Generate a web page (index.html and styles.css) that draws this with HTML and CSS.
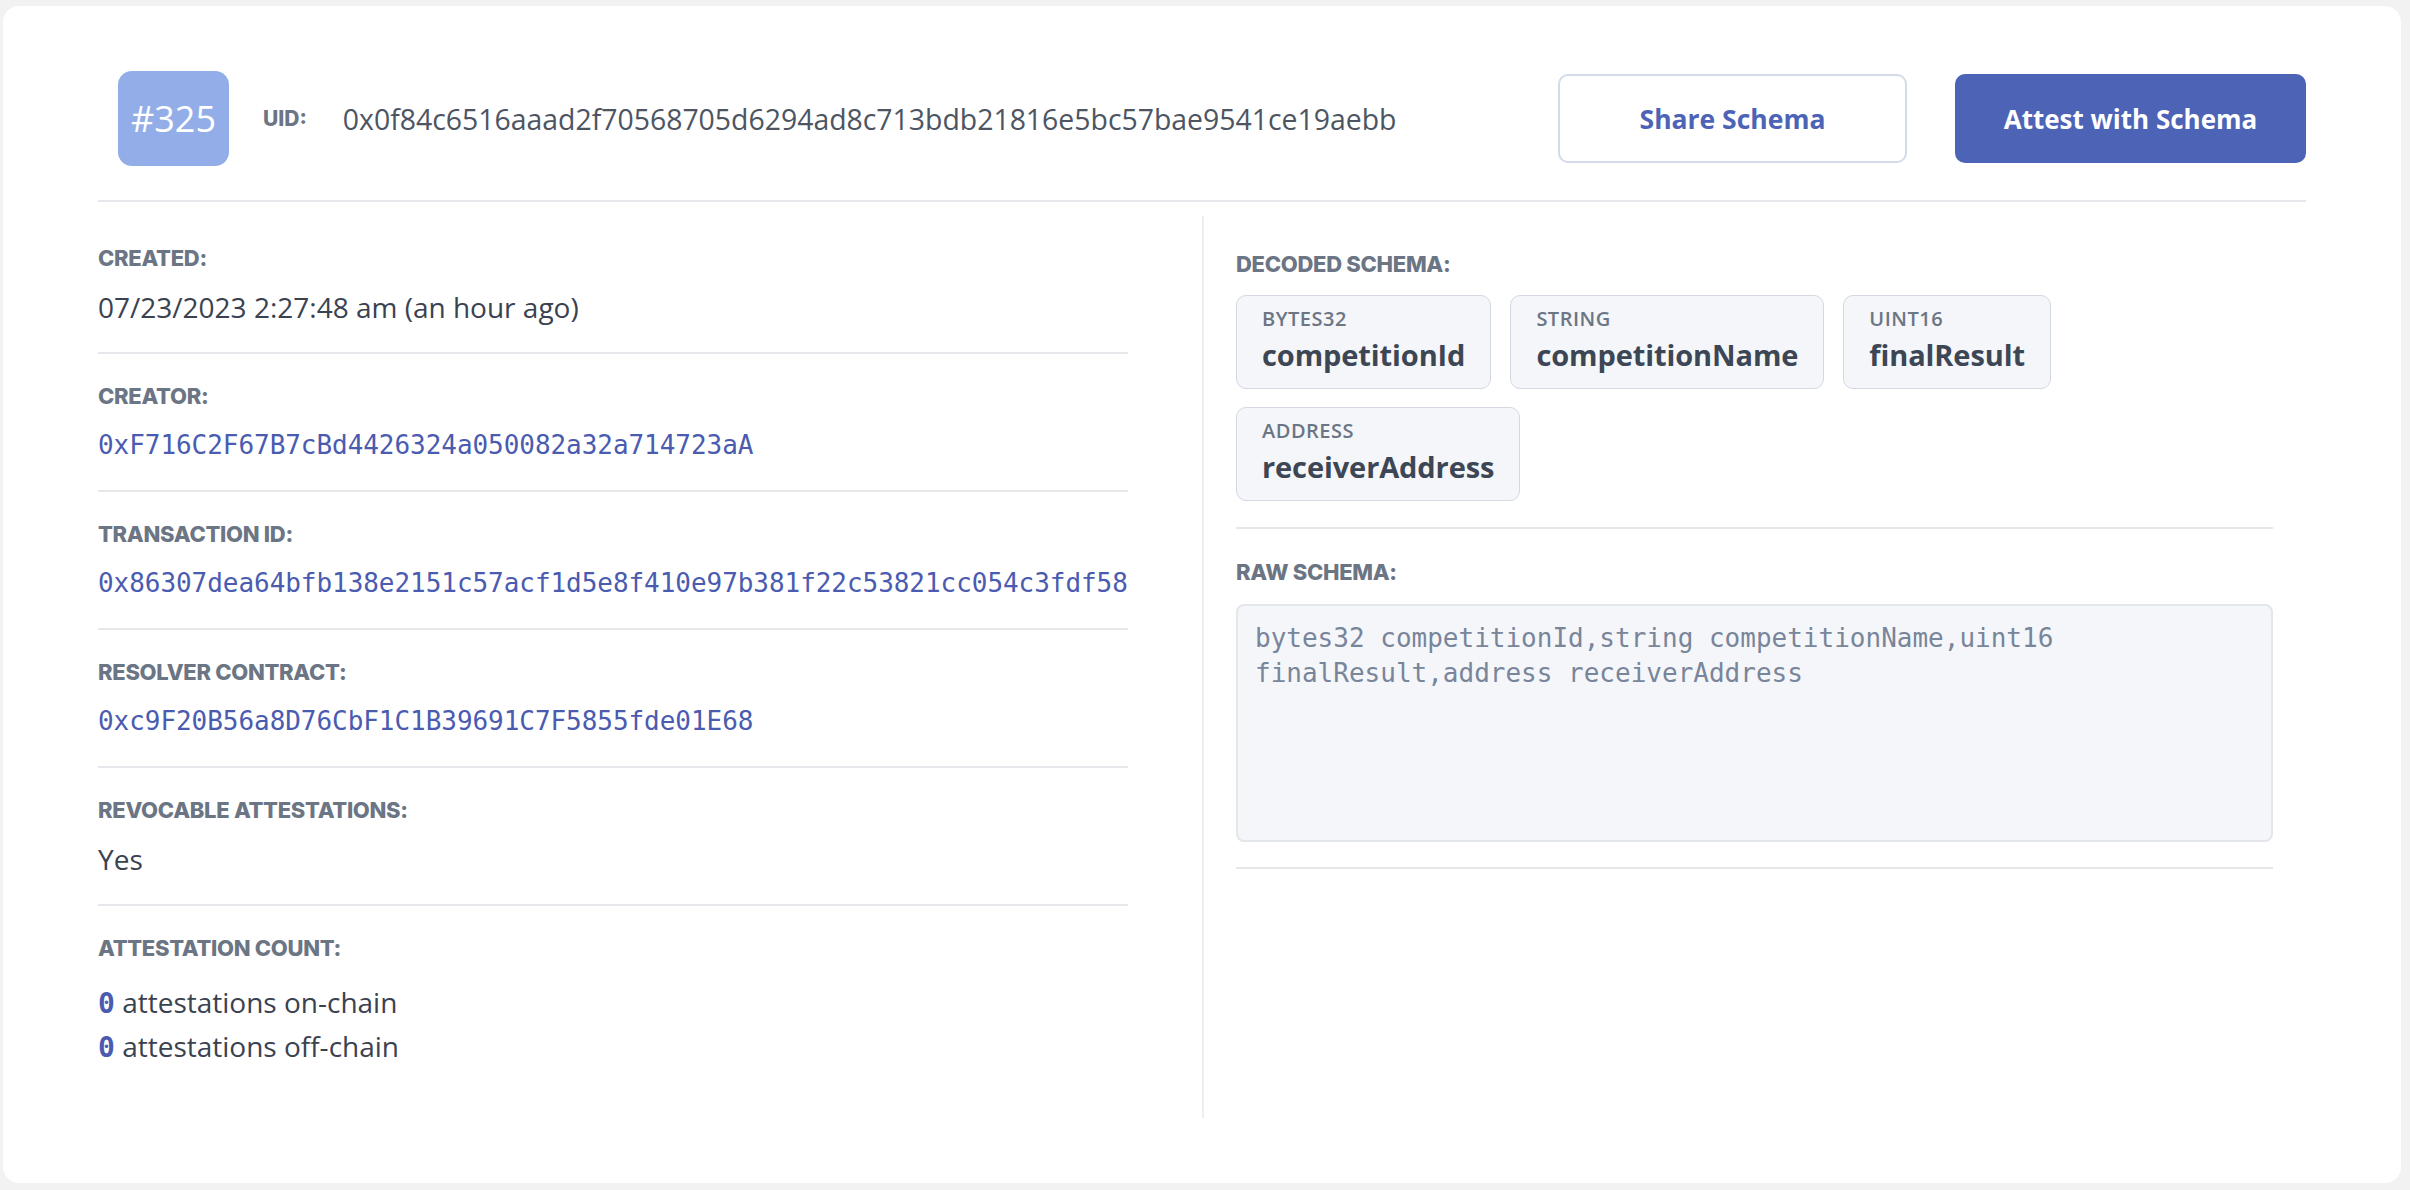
FILE: index.html
```html
<!DOCTYPE html>
<html lang="en">
<head>
<meta charset="utf-8">
<title>Schema #325</title>
<link rel="stylesheet" href="styles.css">
</head>
<body>
<div class="page">
  <div class="card">
    <header class="header">
      <div class="badge">#325</div>
      <span class="uid-label">UID:</span>
      <span class="uid-value">0x0f84c6516aaad2f70568705d6294ad8c713bdb21816e5bc57bae9541ce19aebb</span>
      <div class="actions">
        <button class="btn btn-outline">Share Schema</button>
        <button class="btn btn-primary">Attest with Schema</button>
      </div>
    </header>
    <div class="columns">
      <div class="col-left">
        <section class="field">
          <div class="label">CREATED:</div>
          <div class="value">07/23/2023 2:27:48 am (an hour ago)</div>
        </section>
        <section class="field">
          <div class="label">CREATOR:</div>
          <div class="value mono">0xF716C2F67B7cBd4426324a050082a32a714723aA</div>
        </section>
        <section class="field">
          <div class="label">TRANSACTION ID:</div>
          <div class="value mono">0x86307dea64bfb138e2151c57acf1d5e8f410e97b381f22c53821cc054c3fdf58</div>
        </section>
        <section class="field">
          <div class="label">RESOLVER CONTRACT:</div>
          <div class="value mono">0xc9F20B56a8D76CbF1C1B39691C7F5855fde01E68</div>
        </section>
        <section class="field">
          <div class="label">REVOCABLE ATTESTATIONS:</div>
          <div class="value">Yes</div>
        </section>
        <section class="field field-last">
          <div class="label">ATTESTATION COUNT:</div>
          <div class="counts">
            <div class="count-line"><span class="count-num">0</span> attestations on-chain</div>
            <div class="count-line"><span class="count-num">0</span> attestations off-chain</div>
          </div>
        </section>
      </div>
      <div class="col-right">
        <section class="rfield rfield-first">
          <div class="label">DECODED SCHEMA:</div>
          <div class="chips">
            <div class="chip"><div class="chip-type">BYTES32</div><div class="chip-name">competitionId</div></div>
            <div class="chip"><div class="chip-type">STRING</div><div class="chip-name">competitionName</div></div>
            <div class="chip"><div class="chip-type">UINT16</div><div class="chip-name">finalResult</div></div>
            <div class="chip"><div class="chip-type">ADDRESS</div><div class="chip-name">receiverAddress</div></div>
          </div>
        </section>
        <section class="rfield rfield-raw">
          <div class="label">RAW SCHEMA:</div>
          <div class="raw">bytes32 competitionId,string competitionName,uint16 finalResult,address receiverAddress</div>
        </section>
      </div>
    </div>
  </div>
</div>
</body>
</html>
```

FILE: styles.css
```css
* { box-sizing: border-box; }

html, body {
  margin: 0;
  padding: 0;
  background: #f2f2f2;
}

body {
  font-family: "Open Sans", "Noto Sans", sans-serif;
  color: #3a4250;
}

.page {
  padding: 6px 9px 8px 3px;
}

.card {
  background: #ffffff;
  border-radius: 16px;
  padding: 65px 95px 65px 95px;
}

/* Header */
.header {
  display: flex;
  align-items: center;
  padding: 0 0 34px 20px;
  border-bottom: 2px solid #e6e7ea;
}

.badge {
  width: 111px;
  height: 95px;
  border-radius: 14px;
  background: #93ade8;
  color: #ffffff;
  font-size: 36px;
  font-weight: 500;
  display: flex;
  align-items: center;
  justify-content: center;
}

.uid-label {
  margin-left: 34px;
  font-family: "Inter", sans-serif;
  font-weight: 800;
  font-size: 21px;
  color: #6b7584;
}

.uid-value {
  margin-left: 36px;
  font-size: 28.4px;
  color: #4d5562;
}

.actions {
  margin-left: auto;
  display: flex;
  gap: 48px;
}

.btn {
  width: 349px;
  height: 89px;
  border-radius: 10px;
  font-family: "Open Sans", sans-serif;
  font-weight: 700;
  font-size: 26.5px;
  cursor: pointer;
}

.btn-outline {
  background: #ffffff;
  border: 2px solid #d3dae8;
  color: #4c63b6;
}

.btn-primary {
  width: 351px;
  background: #4c63b6;
  border: 2px solid #4c63b6;
  color: #ffffff;
  font-size: 26px;
}

/* Columns */
.columns {
  display: grid;
  grid-template-columns: 1fr 1fr;
  margin-top: 14px;
}

.col-left {
  padding-right: 74px;
}

.col-right {
  border-left: 2px solid #eceef0;
  padding: 0 33px 0 32px;
}

.label {
  font-family: "Inter", sans-serif;
  font-weight: 800;
  font-size: 22px;
  line-height: 32px;
  letter-spacing: -0.3px;
  color: #6b7584;
}

.field {
  padding: 26px 0 25px;
  border-bottom: 2px solid #e6e7ea;
}

.field .value {
  margin-top: 13px;
  font-size: 28px;
  line-height: 40px;
  color: #3a4250;
  white-space: nowrap;
}

.field .value.mono {
  font-family: "DejaVu Sans Mono", "Liberation Mono", monospace;
  font-size: 26px;
  color: #4a5bb0;
  letter-spacing: -0.05px;
}

.field-last {
  border-bottom: none;
  padding-bottom: 50px;
}

.counts {
  margin-top: 16px;
}

.count-line {
  font-size: 28px;
  line-height: 44px;
  height: 44px;
  color: #3a4250;
}

.count-num {
  font-family: "DejaVu Sans Mono", "Liberation Mono", monospace;
  font-weight: 700;
  color: #4a5bb0;
  font-size: 28px;
  line-height: 44px;
}

/* Right column */
.rfield {
  border-bottom: 2px solid #e6e7ea;
}

.rfield-first {
  padding: 32px 0 26px;
}

.rfield-raw {
  padding: 27px 0 25px;
}

.chips {
  margin-top: 15px;
  display: flex;
  flex-wrap: wrap;
  gap: 18px 19px;
}

.chip {
  background: #f4f6f9;
  border: 1px solid #d4d9e1;
  border-radius: 10px;
  padding: 11px 25px 14px;
}

.chip-type {
  font-weight: 600;
  font-size: 20px;
  line-height: 24px;
  letter-spacing: 0.5px;
  color: #6b7584;
}

.chip-name {
  margin-top: 5px;
  font-weight: 700;
  font-size: 29px;
  line-height: 38px;
  letter-spacing: -0.1px;
  color: #3d4654;
}

.raw {
  margin-top: 16px;
  height: 238px;
  background: #f5f6f9;
  border: 2px solid #e3e6eb;
  border-radius: 8px;
  padding: 15px 17px;
  font-family: "DejaVu Sans Mono", "Liberation Mono", monospace;
  font-size: 26px;
  line-height: 35px;
  color: #78859a;
  white-space: pre-wrap;
  word-break: normal;
}
```
